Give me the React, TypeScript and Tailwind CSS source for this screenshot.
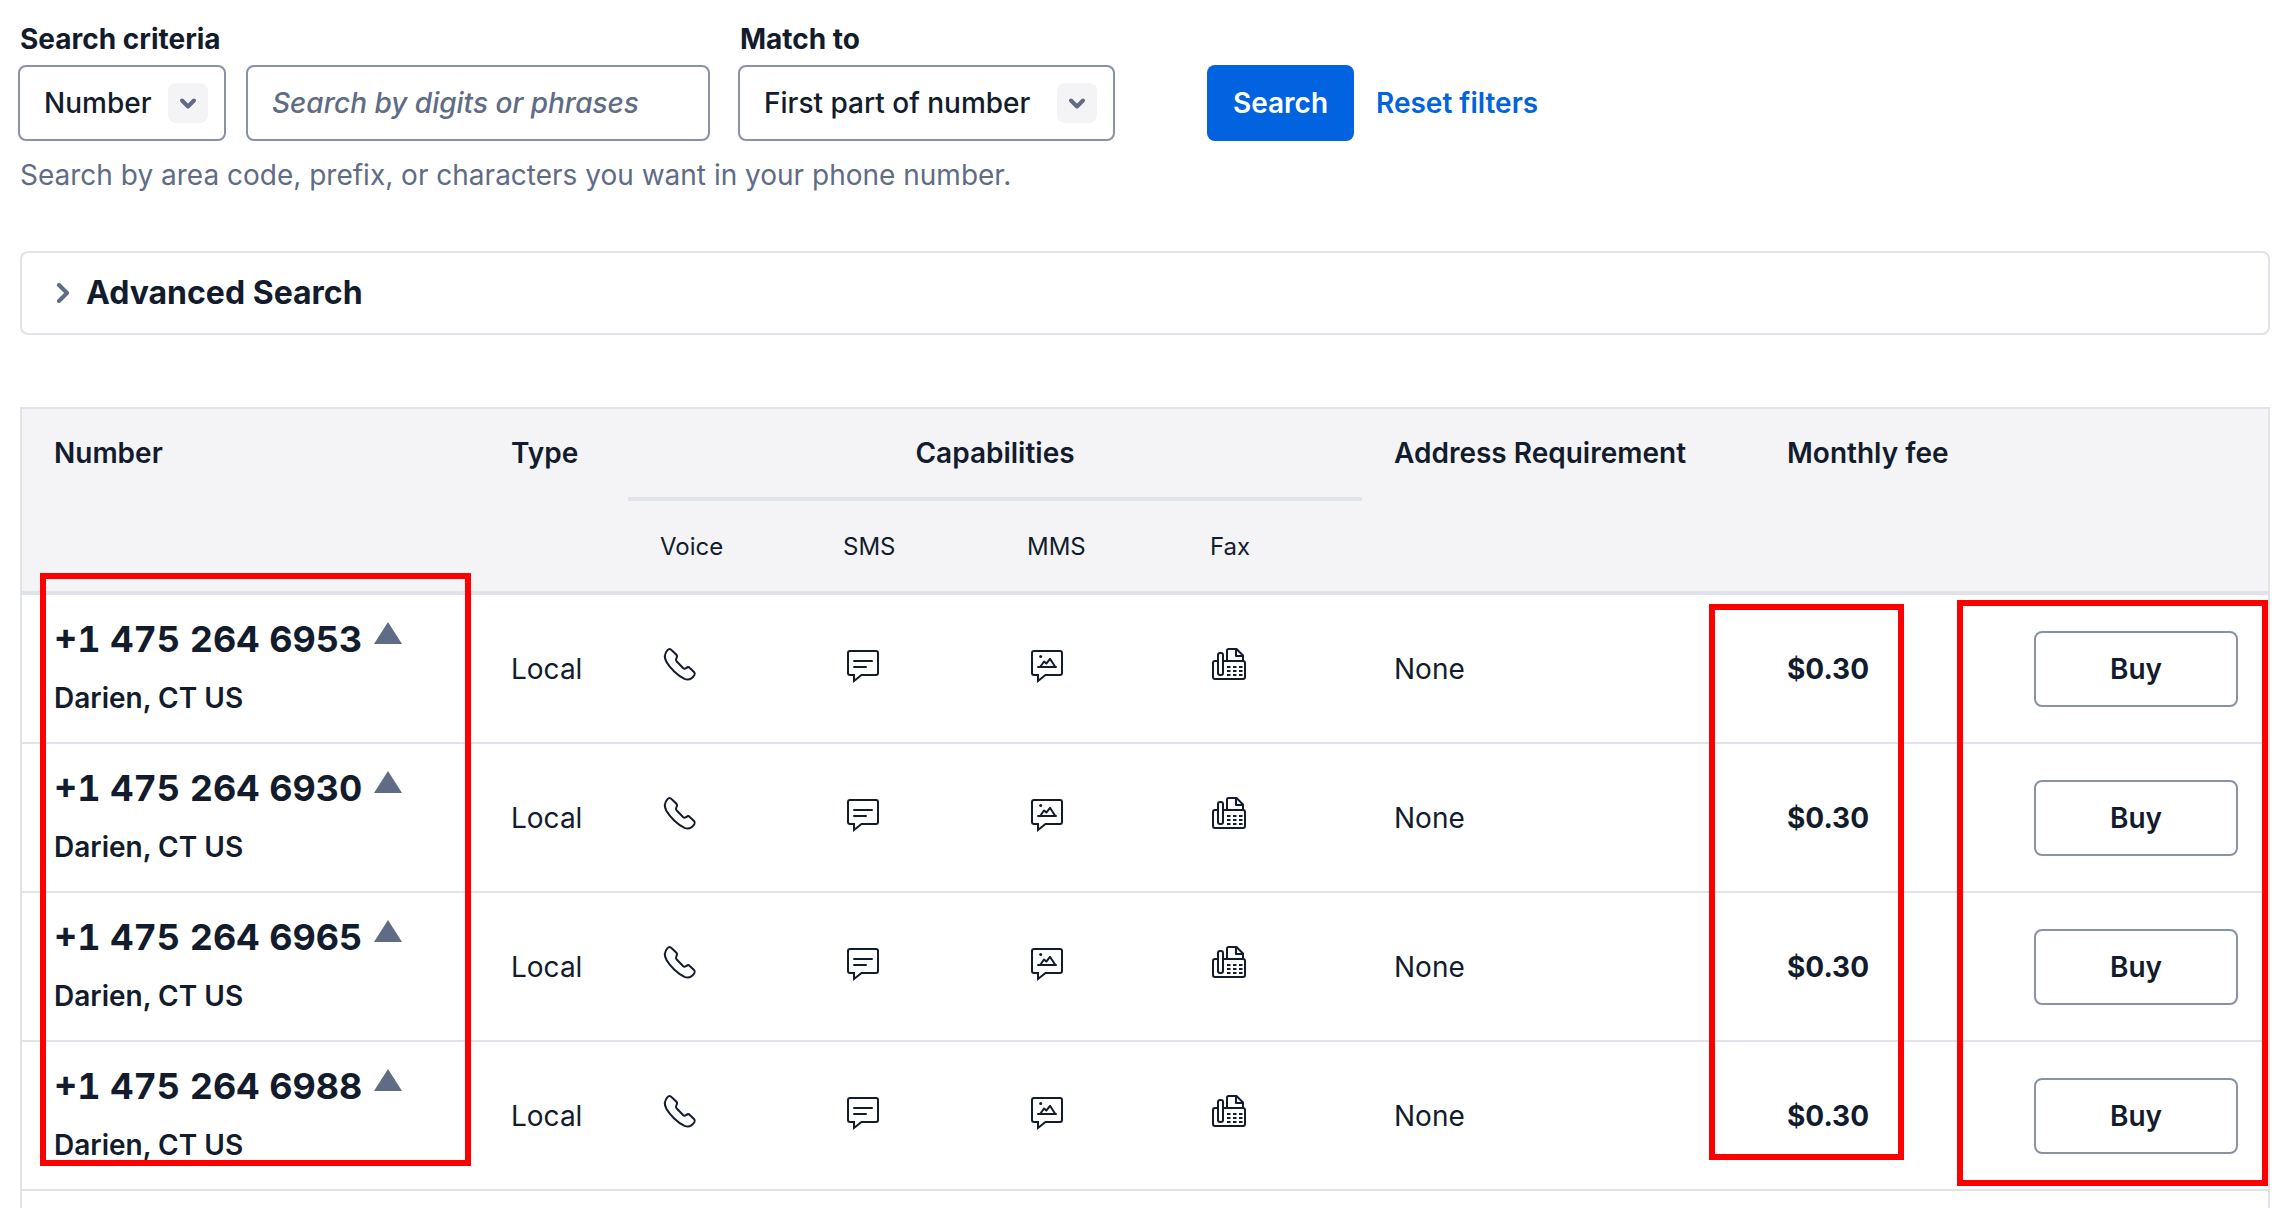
import type { ReactNode } from "react";

const numbers = [
    "+1 475 264 6953",
    "+1 475 264 6930",
    "+1 475 264 6965",
    "+1 475 264 6988",
];

const capabilities = ["Voice", "SMS", "MMS", "Fax"];

function Icon({ label, children }: { label: string; children: ReactNode }) {
    return (
        <svg
            role="img"
            aria-label={label}
            viewBox="0 0 40 40"
            fill="none"
            stroke="currentColor"
            strokeWidth="2"
            strokeLinecap="round"
            strokeLinejoin="round"
            className="mb-2.5 block size-10"
        >
            {children}
        </svg>
    );
}

const bubble = "M7 7H33a2 2 0 0 1 2 2V29a2 2 0 0 1-2 2H18.5L11 37V31H7a2 2 0 0 1-2-2V9a2 2 0 0 1 2-2Z";

function CapabilityIcon({ name }: { name: string }) {
    if (name === "Voice") {
        return (
            <Icon label="Voice">
                <path d="M9.5 5C10.5 5 11 5.5 12 6.5L16.2 10.5C17.5 11.7 17.3 12.5 16.6 13.8C15.6 15.5 15.6 16.2 16.5 17.2L23 24C24 25 24.8 25 26 24.2C27.5 23 28.5 22.6 29.5 23.7L34 28C35.2 29.2 35.2 30 34.5 31C32 34.8 28.5 36.5 24.5 34.8C17.5 31.5 10 24 6.5 18C4 13.5 4.5 9.5 7.5 6.2C8.3 5.3 8.8 5 9.5 5Z" />
            </Icon>
        );
    }
    if (name === "SMS") {
        return (
            <Icon label="SMS">
                <path d={bubble} strokeLinejoin="miter" />
                <path d="M11 17H29M11 23H23" />
            </Icon>
        );
    }
    if (name === "MMS") {
        return (
            <Icon label="MMS">
                <path d={bubble} strokeLinejoin="miter" />
                <circle cx="13.7" cy="12.5" r="1.5" fill="currentColor" stroke="none" />
                <path d="M11 23H29M13.5 22.5L17 17.5L19.3 19.6L23 14.8L28 22.5" />
            </Icon>
        );
    }
    return (
        <Icon label="Fax">
            <path d="M7 17H5a2 2 0 0 0-2 2V33a2 2 0 0 0 2 2H33a2 2 0 0 0 2-2V19a2 2 0 0 0-2-2H14" />
            <rect x="8" y="9" width="5" height="22" rx="2" />
            <path d="M17 17V6.5A1.5 1.5 0 0 1 18.5 5H26.5L33 11.5V17M26 5.5V12H32.500" />
            <path
                d="M17 23H20.500M23 23H26.500M29 23H32.500M17 27H20.500M23 27H26.500M29 27H32.500M17 31H20.500M23 31H26.500M29 31H32.500"
                strokeLinecap="butt"
            />
        </Icon>
    );
}

function SelectBox({ id, option, className }: { id: string; option: string; className: string }) {
    return (
        <div className={`relative ${className}`}>
            <select
                id={id}
                className="h-[76px] w-full appearance-none rounded-lg border-2 border-[#8891aa] bg-white pl-6 pr-16 font-medium"
            >
                <option>{option}</option>
            </select>
            <span className="pointer-events-none absolute right-[18px] top-[18px] flex size-10 items-center justify-center rounded-lg bg-[#f4f4f6] text-[#606b85]">
                <svg viewBox="0 0 20 20" fill="none" stroke="currentColor" strokeWidth="4" strokeLinecap="round" strokeLinejoin="round" className="size-5">
                    <path d="M4 7.5L10 13.5L16 7.5" />
                </svg>
            </span>
        </div>
    );
}

export default function App() {
    return (
        <main className="flex min-h-screen flex-col bg-white px-5 pt-[19px] font-['Inter',sans-serif] text-[28px] leading-10 text-[#121c2d]">
            <form onSubmit={(e) => e.preventDefault()}>
                <div className="-ml-0.5 flex items-end">
                    <div className="flex flex-col gap-1.5">
                        <label htmlFor="criteria" className="pl-0.5 font-bold">
                            Search criteria
                        </label>
                        <div className="flex gap-5">
                            <SelectBox id="criteria" option="Number" className="w-[208px]" />
                            <input
                                type="text"
                                aria-label="Search by digits or phrases"
                                placeholder="Search by digits or phrases"
                                className="h-[76px] w-[464px] rounded-lg border-2 border-[#8891aa] px-6 font-medium placeholder:italic placeholder:text-[#606b85]"
                            />
                        </div>
                    </div>
                    <div className="ml-7 flex flex-col gap-1.5">
                        <label htmlFor="match" className="pl-0.5 font-bold">
                            Match to
                        </label>
                        <SelectBox id="match" option="First part of number" className="w-[377px]" />
                    </div>
                    <button type="submit" className="ml-[92px] h-[76px] w-[147px] rounded-lg bg-[#0263e0] font-semibold text-white">
                        Search
                    </button>
                    <button type="reset" className="ml-[22px] h-[76px] font-semibold text-[#0263e0]">
                        Reset filters
                    </button>
                </div>
                <p className="mt-3.5 text-[#606b85]">
                    Search by area code, prefix, or characters you want in your phone number.
                </p>
            </form>

            <section className="mt-14 rounded-lg border-2 border-[#e1e3ea]">
                <button type="button" aria-expanded="false" className="flex w-full items-center gap-3 px-8 py-5 text-left text-[32px] font-bold">
                    <svg viewBox="0 0 20 20" fill="none" stroke="#606b85" strokeWidth="4" strokeLinecap="round" strokeLinejoin="round" className="size-5">
                        <path d="M5 2L13 10L5 18" />
                    </svg>
                    Advanced Search
                </button>
            </section>

            <section className="relative mt-[72px] flex-1 border-2 border-b-0 border-[#e1e3ea]">
                <table className="w-full table-fixed border-separate border-spacing-0 text-left">
                    <colgroup>
                        <col className="w-[457px]" />
                        <col className="w-[149px]" />
                        <col className="w-[183px]" />
                        <col className="w-[184px]" />
                        <col className="w-[183px]" />
                        <col className="w-[184px]" />
                        <col className="w-[393px]" />
                        <col />
                        <col className="w-[266px]" />
                    </colgroup>
                    <thead className="bg-[#f4f4f6]">
                        <tr className="h-[92px] align-top">
                            <th rowSpan={2} className="border-b-4 border-[#e1e3ea] px-8 py-6 font-semibold">Number</th>
                            <th rowSpan={2} className="border-b-4 border-[#e1e3ea] px-8 py-6 font-semibold">Type</th>
                            <th colSpan={4} className="border-b-4 border-[#e1e3ea] px-8 py-6 text-center font-semibold">
                                Capabilities
                            </th>
                            <th rowSpan={2} className="border-b-4 border-[#e1e3ea] px-8 py-6 font-semibold">
                                Address Requirement
                            </th>
                            <th rowSpan={2} className="border-b-4 border-[#e1e3ea] px-8 py-6 font-semibold">Monthly fee</th>
                            <td rowSpan={2} className="border-b-4 border-[#e1e3ea]" />
                        </tr>
                        <tr className="h-[94px] text-2xl leading-10">
                            {capabilities.map((name) => (
                                <th key={name} className="border-b-4 border-[#e1e3ea] px-8 pt-0.5 font-normal">
                                    {name}
                                </th>
                            ))}
                        </tr>
                    </thead>
                    <tbody>
                        {numbers.map((number) => (
                            <tr key={number}>
                                <td className="border-b-2 border-[#e1e3ea] px-8 py-6">
                                    <div className="flex flex-col gap-[19px]">
                                        <div className="flex items-start gap-3 text-4xl leading-10 font-bold tabular-nums">
                                            {number}
                                            <svg viewBox="0 0 28 22" className="mt-[3px] h-[22px] w-7" fill="#606b85">
                                                <path d="M14 0L28 22H0Z" />
                                            </svg>
                                        </div>
                                        <div className="font-semibold">Darien, CT US</div>
                                    </div>
                                </td>
                                <td className="border-b-2 border-[#e1e3ea] px-8">Local</td>
                                {capabilities.map((name) => (
                                    <td key={name} className="border-b-2 border-[#e1e3ea] px-8">
                                        <CapabilityIcon name={name} />
                                    </td>
                                ))}
                                <td className="border-b-2 border-[#e1e3ea] px-8">None</td>
                                <td className="border-b-2 border-[#e1e3ea] px-8 font-bold">$0.30</td>
                                <td className="border-b-2 border-[#e1e3ea] pl-8 pr-[30px]">
                                    <button type="button" className="block h-[76px] w-full rounded-lg border-2 border-[#8891aa] bg-white font-semibold">
                                        Buy
                                    </button>
                                </td>
                            </tr>
                        ))}
                    </tbody>
                </table>

                {/* highlight frames */}
                <div className="pointer-events-none absolute left-[18px] top-[164px] h-[593px] w-[431px] border-6 border-[#ff0000]" />
                <div className="pointer-events-none absolute right-[364px] top-[195px] h-[556px] w-[195px] border-6 border-[#ff0000]" />
                <div className="pointer-events-none absolute right-0 top-[191px] h-[586px] w-[311px] border-6 border-[#ff0000]" />
            </section>
        </main>
    );
}
